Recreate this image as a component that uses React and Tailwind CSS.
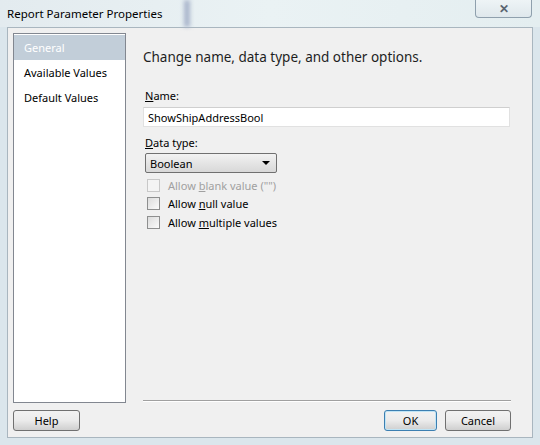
import { useState } from 'react'

const PAGES = ['General', 'Available Values', 'Default Values']

function Check({ label, hotkey, disabled, checked, onChange }) {
  const i = label.indexOf(hotkey)
  return (
    <label className={`flex items-center h-[18.5px] ${disabled ? 'text-[#a0a0a0]' : 'text-black'}`}>
      <span
        onClick={() => !disabled && onChange(!checked)}
        className={`w-[13px] h-[13px] ml-[4px] mr-[8px] border flex items-center justify-center ${
          disabled ? 'border-[#c8c8c8] bg-[#f4f4f4]' : 'border-[#8e8f8f] bg-gradient-to-br from-[#dcdcdc] to-[#fbfbfb]'
        }`}
      >
        {checked && <span className="text-[10px] leading-none">✓</span>}
      </span>
      <span>
        {label.slice(0, i)}
        <span className="underline">{hotkey}</span>
        {label.slice(i + 1)}
      </span>
    </label>
  )
}

function Button({ children, focused }) {
  return (
    <button
      className={`h-[21px] rounded-[3px] border text-[11px] bg-gradient-to-b from-[#f2f2f2] via-[#ebebeb] to-[#cfcfcf] ${
        focused ? 'border-[#3c7fb1] shadow-[inset_0_0_0_1px_#c0e4f5]' : 'border-[#707070]'
      }`}
    >
      {children}
    </button>
  )
}

export default function App() {
  const [page, setPage] = useState('General')
  const [name, setName] = useState('ShowShipAddressBool')
  const [allowNull, setAllowNull] = useState(false)
  const [allowMulti, setAllowMulti] = useState(false)

  return (
    <div
      className="w-[540px] h-[445px] overflow-hidden bg-[#dbe6ec] text-[11px] leading-[15px] flex flex-col"
      style={{ fontFamily: '"Noto Sans", "Liberation Sans", sans-serif' }}
    >
      {/* title bar */}
      <div className="relative h-[27px] shrink-0 bg-gradient-to-r from-[#e3ebef] via-[#eaf2f4] to-[#e4eef0]">
        <div className="absolute left-[184px] top-0 w-[6px] h-full bg-[#a9b5cb] blur-[2px]" />
        <span className="absolute left-[7px] top-[6px] text-[11.5px] text-black">Report Parameter Properties</span>
        <div className="absolute right-[8px] top-0 w-[57px] h-[18px] rounded-b-[4px] border border-t-0 border-[#8fa0ad] bg-gradient-to-b from-[#eef4f6] to-[#dfe8ec] flex items-center justify-center text-[#5a6570] text-[12px] font-bold">
          ✕
        </div>
      </div>

      {/* client area */}
      <div className="mx-[7px] mb-[7px] flex-1 bg-[#f0f0f0] border border-[#a9b6bf] flex flex-col px-[5px] pt-[5px]">
        <div className="flex flex-1">
          <div className="w-[113px] bg-white border border-[#828790] pt-px">
            {PAGES.map((p) => (
              <div
                key={p}
                onClick={() => setPage(p)}
                className={`h-[25px] pl-[10px] flex items-center ${
                  page === p ? 'bg-[#c2ced9] text-white' : 'text-black'
                }`}
              >
                {p}
              </div>
            ))}
          </div>

          <div className="flex-1 flex flex-col pl-[17px] pr-[16px]">
            <div className="mt-[14px] text-[13.5px] leading-[20px] text-[#1e1e1e]">Change name, data type, and other options.</div>

            <div className="mt-[21px] pl-[2px]">
              <span className="underline">N</span>ame:
            </div>
            <input
              value={name}
              onChange={(e) => setName(e.target.value)}
              className="mt-[4px] h-[20px] w-[367px] bg-white border border-[#e1e1e1] border-t-[#cfcfcf] px-[4px] text-[11px] outline-none"
            />

            <div className="mt-[8px] pl-[2px]">
              <span className="underline">D</span>ata type:
            </div>
            <div className="mt-[3px] ml-[2px] h-[20px] w-[132px] rounded-[2px] border border-[#707070] bg-gradient-to-b from-[#f2f2f2] to-[#d8d8d8] flex items-center justify-between px-[4px]">
              <span>Boolean</span>
              <span className="w-0 h-0 border-l-[4px] border-r-[4px] border-t-[4px] border-l-transparent border-r-transparent border-t-black mr-[2px]" />
            </div>

            <div className="mt-[3px] flex flex-col">
              <Check label='Allow blank value ("")' hotkey="b" disabled />
              <Check label="Allow null value" hotkey="n" checked={allowNull} onChange={setAllowNull} />
              <Check label="Allow multiple values" hotkey="m" checked={allowMulti} onChange={setAllowMulti} />
            </div>

            <div className="flex-1" />
            <div className="h-[2px] border-t border-[#a0a0a0] border-b border-b-white mb-[1px]" />
          </div>
        </div>

        <div className="h-[34px] flex items-start justify-between pr-[16px] pt-[7px]">
          <div className="w-[67px] flex flex-col">
            <Button>Help</Button>
          </div>
          <div className="flex gap-[8px]">
            <div className="w-[53px] flex flex-col">
              <Button focused>OK</Button>
            </div>
            <div className="w-[66px] flex flex-col">
              <Button>Cancel</Button>
            </div>
          </div>
        </div>
      </div>
    </div>
  )
}
